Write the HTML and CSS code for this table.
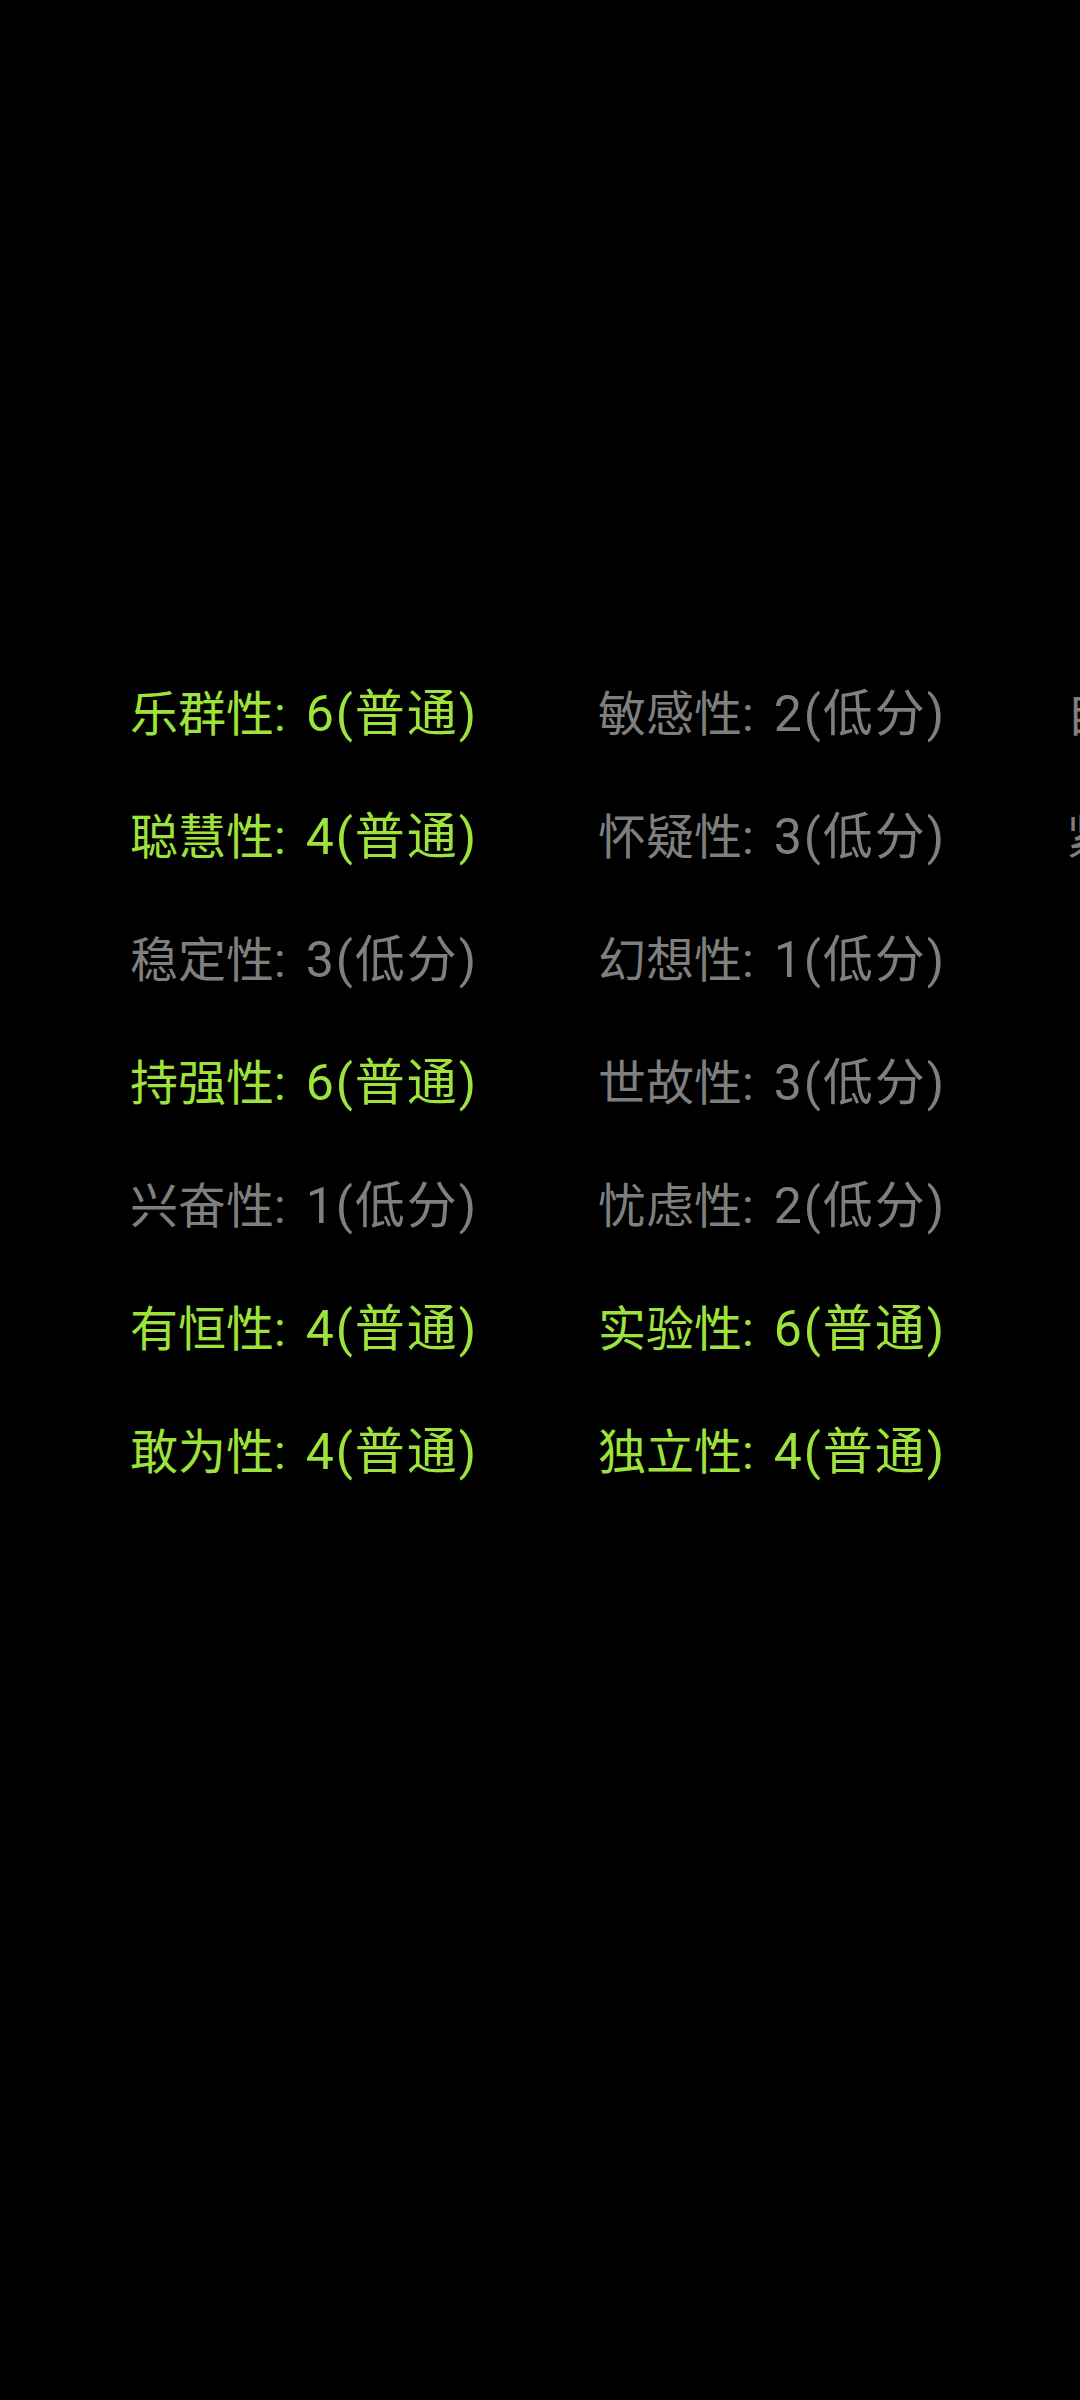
FILE: index.html
```html
<!DOCTYPE html>
<html lang="zh-CN">
<head>
<meta charset="utf-8">
<link rel="stylesheet" href="styles.css">
</head>
<body>
<div class="board">
  <div class="col">
    <div class="item hi"><span class="key">乐群性:</span><span class="val">6(普通)</span></div>
    <div class="item hi"><span class="key">聪慧性:</span><span class="val">4(普通)</span></div>
    <div class="item lo"><span class="key">稳定性:</span><span class="val">3(低分)</span></div>
    <div class="item hi"><span class="key">持强性:</span><span class="val">6(普通)</span></div>
    <div class="item lo"><span class="key">兴奋性:</span><span class="val">1(低分)</span></div>
    <div class="item hi"><span class="key">有恒性:</span><span class="val">4(普通)</span></div>
    <div class="item hi"><span class="key">敢为性:</span><span class="val">4(普通)</span></div>
  </div>
  <div class="col">
    <div class="item lo"><span class="key">敏感性:</span><span class="val">2(低分)</span></div>
    <div class="item lo"><span class="key">怀疑性:</span><span class="val">3(低分)</span></div>
    <div class="item lo"><span class="key">幻想性:</span><span class="val">1(低分)</span></div>
    <div class="item lo"><span class="key">世故性:</span><span class="val">3(低分)</span></div>
    <div class="item lo"><span class="key">忧虑性:</span><span class="val">2(低分)</span></div>
    <div class="item hi"><span class="key">实验性:</span><span class="val">6(普通)</span></div>
    <div class="item hi"><span class="key">独立性:</span><span class="val">4(普通)</span></div>
  </div>
  <div class="col">
    <div class="item lo"><span class="key">自律性:</span><span class="val">3(低分)</span></div>
    <div class="item lo"><span class="key">紧张性:</span><span class="val">3(低分)</span></div>
  </div>
</div>
</body>
</html>
```
FILE: styles.css
```css
html, body {
  margin: 0;
  padding: 0;
  background: #000;
  width: 1080px;
  height: 2400px;
  overflow: hidden;
}
.board {
  display: flex;
  padding: 653px 0 0 130px;
}
.col {
  flex: 0 0 468px;
  display: flex;
  flex-direction: column;
}
.item {
  height: 123px;
  line-height: 123px;
  font-family: Roboto, "Noto Sans CJK SC", sans-serif;
  font-size: 48px;
  white-space: nowrap;
}
.key {
  margin-right: 20px;
}
.val {
  font-size: 50px;
  letter-spacing: 2px;
}
.hi { color: #9ee23c; }
.lo { color: #7f7f7f; }
```
